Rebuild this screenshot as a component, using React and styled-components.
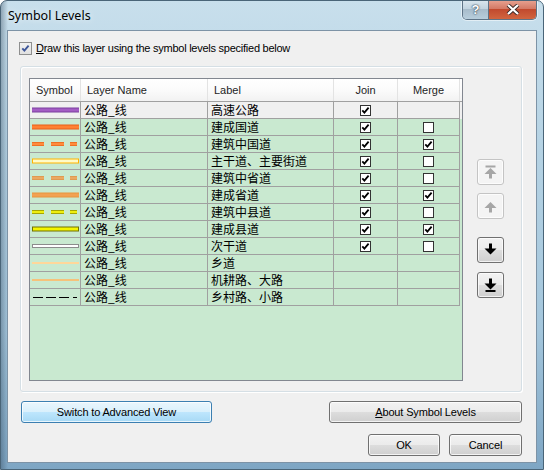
import React from 'react';
import styled, { createGlobalStyle } from 'styled-components';

const GlobalStyle = createGlobalStyle`
  html, body { margin: 0; padding: 0; background: #ffffff; }
  body {
    font-family: "Liberation Sans", Arial, sans-serif;
    font-size: 11px;
    color: #000;
  }
  * { box-sizing: border-box; }
`;

const Window = styled.div`
  width: 544px;
  height: 470px;
  border: 1px solid #4a6578;
  border-radius: 7px 7px 0 0;
  background:
    linear-gradient(90deg, rgba(40, 60, 80, 0.35) 0px, rgba(40, 60, 80, 0) 7px),
    linear-gradient(180deg, #c8dfec 0%, #b6d3e4 30%, #a4c6dc 70%, #7ea6c4 100%);
  display: flex;
  flex-direction: column;
  padding: 0 6px 6px;
  overflow: hidden;
`;

const TitleBar = styled.div`
  height: 29px;
  display: flex;
  align-items: flex-start;
  justify-content: space-between;
`;

const Title = styled.div`
  font-family: "Noto Sans", "Open Sans", sans-serif;
  font-size: 12.5px;
  line-height: 16px;
  margin-top: 7px;
  margin-left: 1px;
  color: #000;
  text-shadow: 0 0 6px rgba(255, 255, 255, 0.9);
`;

const CaptionGroup = styled.div`
  display: flex;
  margin-top: -1px;
  margin-right: 0px;
  border: 1px solid #5e7386;
  border-top: none;
  border-radius: 0 0 5px 5px;
  overflow: hidden;
  box-shadow: 0 0 0 1px rgba(255, 255, 255, 0.5);
`;

const CaptionButton = styled.div`
  width: ${(p) => p.$w}px;
  height: 19px;
  display: flex;
  align-items: center;
  justify-content: center;
  font-family: "Liberation Sans", Arial, sans-serif;
  font-weight: bold;
  font-size: 13px;
  color: #fff;
  background: ${(p) =>
    p.$close
      ? 'linear-gradient(180deg, #e8a493 0%, #d47a66 45%, #c24a2e 50%, #d1653f 100%)'
      : 'linear-gradient(180deg, #dbe7ef 0%, #c2d4e0 45%, #a8bccb 50%, #b8cedc 100%)'};
  border-right: ${(p) => (p.$close ? 'none' : '1px solid #5e7386')};
  text-shadow: 0 0 2px #2a3a48, 0 0 1px #2a3a48;
`;

const Client = styled.div`
  flex: 1;
  border: 1px solid #7d93a6;
  background: #f0f0f0;
  display: flex;
  flex-direction: column;
`;

const CheckRow = styled.label`
  display: flex;
  align-items: center;
  gap: 4px;
  margin: 10px 0 0 11px;
  height: 14px;
  letter-spacing: -0.25px;
`;

const AeroBox = styled.span`
  width: 13px;
  height: 13px;
  border: 1px solid #8e8f8f;
  background: linear-gradient(180deg, #f2f2f2, #e0e0e0);
  display: flex;
  align-items: center;
  justify-content: center;
`;

const Underlined = styled.span`
  text-decoration: underline;
  text-underline-offset: 1px;
`;

const Panel = styled.div`
  margin: 11px 0 0 12px;
  width: 502px;
  height: 326px;
  border: 1px solid #d5dfe5;
  border-radius: 3px;
  box-shadow: inset 1px 1px 0 #ffffff, 1px 1px 0 #ffffff;
  display: flex;
  padding: 11px 0 0 8px;
`;

const Grid = styled.div`
  width: 434px;
  height: 303px;
  border: 1px solid #828790;
  background: #c9e9d0;
  display: flex;
  flex-direction: column;
`;

const cols = '51px 127px 126px 64px 62px';

const HeaderRow = styled.div`
  display: grid;
  grid-template-columns: ${cols};
  height: 23px;
  background: linear-gradient(180deg, #ffffff 0%, #fbfbfb 50%, #f2f2f2 100%);
  border-bottom: 1px solid #a0a0a0;
`;

const HeaderCell = styled.div`
  display: flex;
  align-items: center;
  justify-content: ${(p) => (p.$center ? 'center' : 'flex-start')};
  padding-left: ${(p) => (p.$center ? 0 : p.$pad)}px;
  border-right: 1px solid #e3e3e3;
  color: #1e1e1e;
`;

const Row = styled.div`
  display: grid;
  grid-template-columns: ${cols};
  height: 17px;
  background: ${(p) => (p.$first ? '#f0f0f0' : '#c9e9d0')};
`;

const Cell = styled.div`
  border-right: 1px solid #a0a0a0;
  border-bottom: 1px solid #a0a0a0;
  display: flex;
  align-items: center;
  justify-content: ${(p) => (p.$center ? 'center' : 'flex-start')};
  padding-left: ${(p) => p.$pad || 0}px;
  font-family: "Noto Sans CJK SC", "Noto Sans", sans-serif;
  font-size: 12px;
  line-height: 16px;
  white-space: nowrap;
  overflow: hidden;
`;

const SmallBox = styled.span`
  width: 11px;
  height: 11px;
  border: 1px solid #333;
  background: #fff;
  display: flex;
  align-items: center;
  justify-content: center;
`;

const SideButtons = styled.div`
  display: flex;
  flex-direction: column;
  margin-left: 14px;
  padding-top: 81px;
`;

const MoveButton = styled.div`
  width: 27px;
  height: 26px;
  margin-top: ${(p) => p.$gap}px;
  border: 1px solid ${(p) => (p.$disabled ? '#c4c4c4' : '#707070')};
  border-radius: 3px;
  background: ${(p) =>
    p.$disabled
      ? '#f4f4f4'
      : 'linear-gradient(180deg, #f2f2f2 0%, #ebebeb 50%, #dddddd 51%, #cfcfcf 100%)'};
  box-shadow: inset 0 0 0 1px rgba(255, 255, 255, 0.7);
  color: ${(p) => (p.$disabled ? '#a6a6a6' : '#000')};
  display: flex;
  align-items: center;
  justify-content: center;
`;

const ButtonRow = styled.div`
  display: flex;
  justify-content: space-between;
  margin: ${(p) => p.$top}px 14px 0 ${(p) => p.$left}px;
  gap: 9px;
`;

const PushButton = styled.div`
  width: ${(p) => p.$w}px;
  height: 22px;
  border: 1px solid ${(p) => (p.$focus ? '#3c7fb1' : '#707070')};
  border-radius: 3px;
  background: ${(p) =>
    p.$focus
      ? 'linear-gradient(180deg, #eaf6fd 0%, #d9f0fc 50%, #bee6fd 51%, #a7d9f5 100%)'
      : 'linear-gradient(180deg, #f2f2f2 0%, #ebebeb 50%, #dddddd 51%, #cfcfcf 100%)'};
  box-shadow: inset 0 0 0 1px rgba(255, 255, 255, 0.75);
  display: flex;
  align-items: center;
  justify-content: center;
  font-size: 11px;
  letter-spacing: -0.15px;
  color: #000;
`;

const RightGroup = styled.div`
  display: flex;
  gap: 9px;
  margin-left: auto;
`;

const symbols = [
  { type: 'solid', fill: '#a35dc4', edge: '#7b3f9e', h: 5 },
  { type: 'solid', fill: '#ff8233', edge: '#e8601a', h: 5 },
  { type: 'dash', fill: '#ff8c3c', edge: '#ee7024', h: 4 },
  { type: 'double', fill: '#fffbc8', edge: '#ffb300', h: 5 },
  { type: 'dash', fill: '#eaa961', edge: '#e09a50', h: 4 },
  { type: 'solid', fill: '#f2a253', edge: '#e8953f', h: 5 },
  { type: 'dash', fill: '#eeee10', edge: '#a6a600', h: 4 },
  { type: 'double', fill: '#f4f400', edge: '#707000', h: 5 },
  { type: 'double', fill: '#ffffff', edge: '#8c8c8c', h: 4 },
  { type: 'thin', fill: '#ffd79a', h: 2 },
  { type: 'thin', fill: '#f6c27a', h: 2 },
  { type: 'black' },
];

const rows = [
  { label: '高速公路', join: true, merge: null },
  { label: '建成国道', join: true, merge: false },
  { label: '建筑中国道', join: true, merge: true },
  { label: '主干道、主要街道', join: true, merge: false },
  { label: '建筑中省道', join: true, merge: false },
  { label: '建成省道', join: true, merge: true },
  { label: '建筑中县道', join: true, merge: false },
  { label: '建成县道', join: true, merge: true },
  { label: '次干道', join: true, merge: false },
  { label: '乡道', join: null, merge: null },
  { label: '机耕路、大路', join: null, merge: null },
  { label: '乡村路、小路', join: null, merge: null },
];

const dashes = [[2, 14], [21, 34], [40, 47]];
const blackDashes = [[3, 13], [16, 26], [29, 39], [43, 47]];

const SymbolLine = ({ s }) => {
  const y = s.h ? (16 - s.h) / 2 : 8;
  let body = null;
  if (s.type === 'solid' || s.type === 'double') {
    body = (
      <>
        <rect x="2" y={y} width="47" height={s.h} fill={s.edge} />
        <rect x={s.type === 'double' ? 3 : 2} y={y + 1} width={s.type === 'double' ? 45 : 47} height={s.h - 2} fill={s.fill} />
      </>
    );
  } else if (s.type === 'dash') {
    body = dashes.map(([a, b]) => (
      <g key={a}>
        <rect x={a} y={y} width={b - a} height={s.h} fill={s.edge} />
        <rect x={a} y={y + 1} width={b - a} height={s.h - 2} fill={s.fill} />
      </g>
    ));
  } else if (s.type === 'thin') {
    body = <rect x="2" y={y} width="47" height={s.h} fill={s.fill} />;
  } else {
    body = blackDashes.map(([a, b]) => <rect key={a} x={a} y="8" width={b - a} height="1" fill="#000" />);
  }
  return (
    <svg width="50" height="16" viewBox="0 0 50 16">
      {body}
    </svg>
  );
};

const Tick = ({ color = '#000', w = 1.8 }) => (
  <svg width="9" height="9" viewBox="0 0 9 9">
    <path d="M1.3 4.3 L3.4 6.6 L7.6 1.6" fill="none" stroke={color} strokeWidth={w} />
  </svg>
);

const GridCheck = ({ value }) => {
  if (value === null) return null;
  return <SmallBox>{value && <Tick />}</SmallBox>;
};

const ArrowIcon = ({ dir, bar }) => {
  const up = dir === 'up';
  return (
    <svg width="13" height="14" viewBox="0 0 13 14">
      {up ? (
        <>
          {bar && <rect x="1.5" y="0.5" width="10" height="2" fill="currentColor" />}
          <polygon points="6.5,3 0.5,9 12.5,9" fill="currentColor" />
          <rect x="5" y="8.5" width="3" height="5" fill="currentColor" />
        </>
      ) : (
        <>
          <rect x="5" y="0.5" width="3" height="5.5" fill="currentColor" />
          <polygon points="0.5,5.5 12.5,5.5 6.5,11.5" fill="currentColor" />
          {bar && <rect x="1.5" y="12" width="10" height="2" fill="currentColor" />}
        </>
      )}
    </svg>
  );
};

export default function App() {
  return (
    <>
      <GlobalStyle />
      <Window>
        <TitleBar>
          <Title>Symbol Levels</Title>
          <CaptionGroup>
            <CaptionButton $w={26}>?</CaptionButton>
            <CaptionButton $w={47} $close>
              <svg width="14" height="11" viewBox="0 0 14 11">
                <path d="M2 1 L12 10 M12 1 L2 10" stroke="#3a2a28" strokeWidth="4" />
                <path d="M2 1 L12 10 M12 1 L2 10" stroke="#ffffff" strokeWidth="2.2" />
              </svg>
            </CaptionButton>
          </CaptionGroup>
        </TitleBar>
        <Client>
          <CheckRow>
            <AeroBox>
              <Tick color="#3e5699" w={1.9} />
            </AeroBox>
            <span>
              <Underlined>D</Underlined>raw this layer using the symbol levels specified below
            </span>
          </CheckRow>
          <Panel>
            <Grid>
              <HeaderRow>
                <HeaderCell $pad={6}>Symbol</HeaderCell>
                <HeaderCell $pad={6}>Layer Name</HeaderCell>
                <HeaderCell $pad={6}>Label</HeaderCell>
                <HeaderCell $center>Join</HeaderCell>
                <HeaderCell $center>Merge</HeaderCell>
              </HeaderRow>
              {rows.map((r, i) => (
                <Row key={i} $first={i === 0}>
                  <Cell>
                    <SymbolLine s={symbols[i]} />
                  </Cell>
                  <Cell $pad={3}>公路_线</Cell>
                  <Cell $pad={3}>{r.label}</Cell>
                  <Cell $center>
                    <GridCheck value={r.join} />
                  </Cell>
                  <Cell $center>
                    <GridCheck value={r.merge} />
                  </Cell>
                </Row>
              ))}
            </Grid>
            <SideButtons>
              <MoveButton $gap={0} $disabled>
                <ArrowIcon dir="up" bar />
              </MoveButton>
              <MoveButton $gap={8} $disabled>
                <ArrowIcon dir="up" />
              </MoveButton>
              <MoveButton $gap={18}>
                <ArrowIcon dir="down" />
              </MoveButton>
              <MoveButton $gap={9}>
                <ArrowIcon dir="down" bar />
              </MoveButton>
            </SideButtons>
          </Panel>
          <ButtonRow $top={9} $left={13}>
            <PushButton $w={191} $focus>
              Switch to Advanced View
            </PushButton>
            <PushButton $w={193}>
              <span>
                <Underlined>A</Underlined>bout Symbol Levels
              </span>
            </PushButton>
          </ButtonRow>
          <ButtonRow $top={11} $left={13}>
            <RightGroup>
              <PushButton $w={72}>OK</PushButton>
              <PushButton $w={73}>Cancel</PushButton>
            </RightGroup>
          </ButtonRow>
        </Client>
      </Window>
    </>
  );
}
